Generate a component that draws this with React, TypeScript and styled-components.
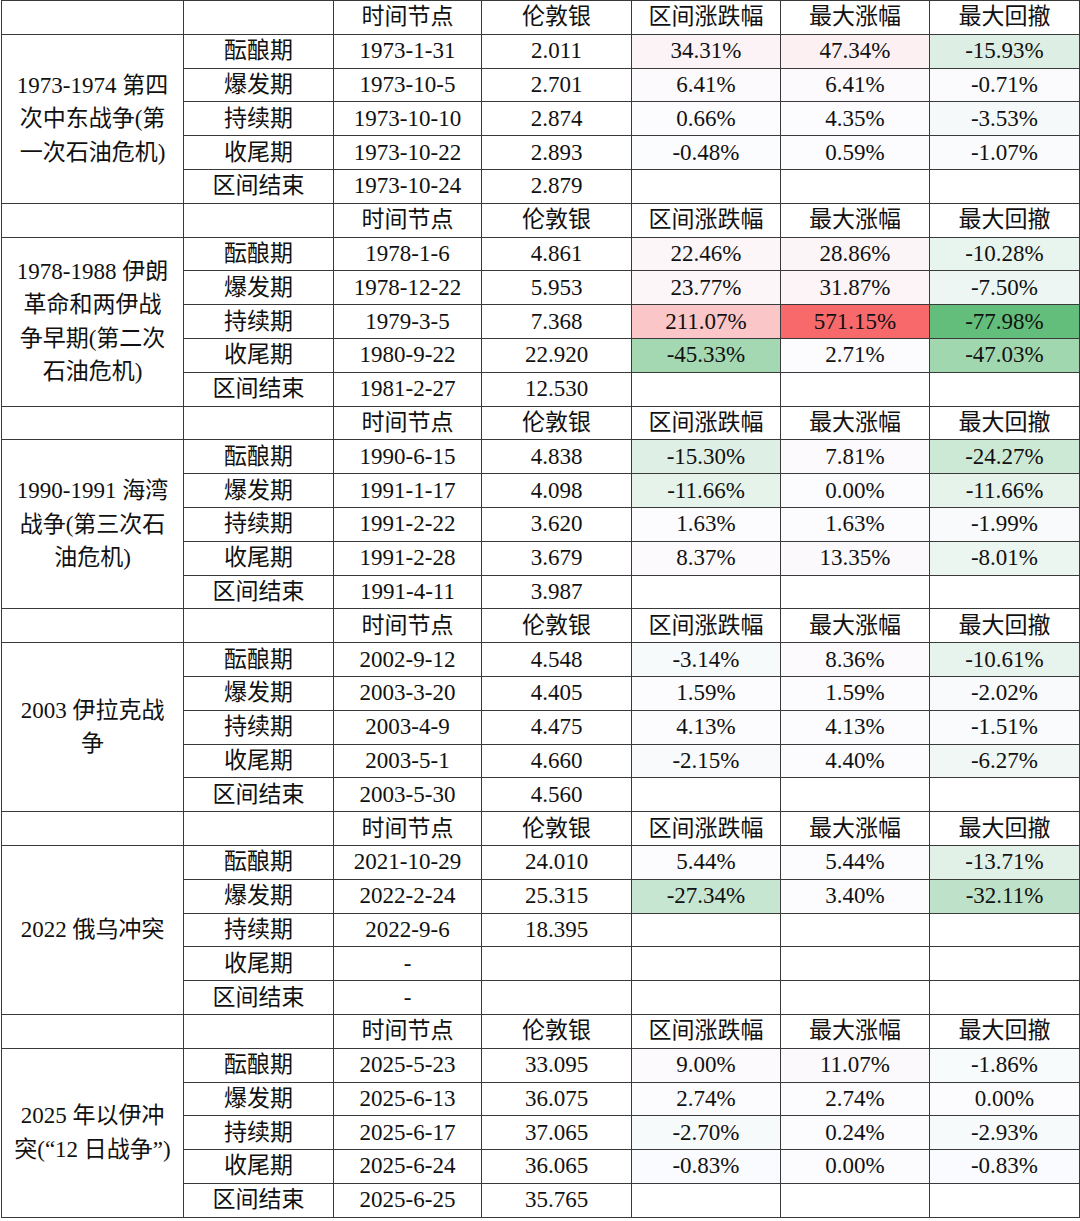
import React from "react";
import styled, { createGlobalStyle } from "styled-components";

const GlobalStyle = createGlobalStyle`
  html, body { margin: 0; padding: 0; background: #ffffff; }
  body { font-family: "Liberation Serif", "Noto Sans CJK SC", serif; color: #111; }
`;

const Table = styled.table`
  border-collapse: collapse;
  table-layout: fixed;
  width: 1078px;
  margin: 0 0 0 1px;
  font-family: "Liberation Serif", "Noto Sans CJK SC", serif;
  font-size: 23px;
  color: #111;
`;

const Row = styled.tr`
  height: 33.8px;
`;

const Cell = styled.td<{ $bg?: string }>`
  border: 1px solid #3a3a3a;
  padding: 0;
  text-align: center;
  vertical-align: middle;
  line-height: 32px;
  white-space: nowrap;
  background: ${(p) => p.$bg || "#ffffff"};
`;

const TitleCell = styled.td`
  border: 1px solid #3a3a3a;
  padding: 0;
  text-align: center;
  vertical-align: middle;
  line-height: 33.5px;
  background: #ffffff;
`;

const TitleLine = styled.div`
  white-space: nowrap;
`;

type Group = { title: string[]; rows: string[][] };

const groups: Group[] = [
  {
    title: ["1973-1974 第四", "次中东战争(第", "一次石油危机)"],
    rows: [
      ["酝酿期", "1973-1-31", "2.011", "34.31%", "47.34%", "-15.93%"],
      ["爆发期", "1973-10-5", "2.701", "6.41%", "6.41%", "-0.71%"],
      ["持续期", "1973-10-10", "2.874", "0.66%", "4.35%", "-3.53%"],
      ["收尾期", "1973-10-22", "2.893", "-0.48%", "0.59%", "-1.07%"],
      ["区间结束", "1973-10-24", "2.879", "", "", ""],
    ],
  },
  {
    title: ["1978-1988 伊朗", "革命和两伊战", "争早期(第二次", "石油危机)"],
    rows: [
      ["酝酿期", "1978-1-6", "4.861", "22.46%", "28.86%", "-10.28%"],
      ["爆发期", "1978-12-22", "5.953", "23.77%", "31.87%", "-7.50%"],
      ["持续期", "1979-3-5", "7.368", "211.07%", "571.15%", "-77.98%"],
      ["收尾期", "1980-9-22", "22.920", "-45.33%", "2.71%", "-47.03%"],
      ["区间结束", "1981-2-27", "12.530", "", "", ""],
    ],
  },
  {
    title: ["1990-1991 海湾", "战争(第三次石", "油危机)"],
    rows: [
      ["酝酿期", "1990-6-15", "4.838", "-15.30%", "7.81%", "-24.27%"],
      ["爆发期", "1991-1-17", "4.098", "-11.66%", "0.00%", "-11.66%"],
      ["持续期", "1991-2-22", "3.620", "1.63%", "1.63%", "-1.99%"],
      ["收尾期", "1991-2-28", "3.679", "8.37%", "13.35%", "-8.01%"],
      ["区间结束", "1991-4-11", "3.987", "", "", ""],
    ],
  },
  {
    title: ["2003 伊拉克战", "争"],
    rows: [
      ["酝酿期", "2002-9-12", "4.548", "-3.14%", "8.36%", "-10.61%"],
      ["爆发期", "2003-3-20", "4.405", "1.59%", "1.59%", "-2.02%"],
      ["持续期", "2003-4-9", "4.475", "4.13%", "4.13%", "-1.51%"],
      ["收尾期", "2003-5-1", "4.660", "-2.15%", "4.40%", "-6.27%"],
      ["区间结束", "2003-5-30", "4.560", "", "", ""],
    ],
  },
  {
    title: ["2022 俄乌冲突"],
    rows: [
      ["酝酿期", "2021-10-29", "24.010", "5.44%", "5.44%", "-13.71%"],
      ["爆发期", "2022-2-24", "25.315", "-27.34%", "3.40%", "-32.11%"],
      ["持续期", "2022-9-6", "18.395", "", "", ""],
      ["收尾期", "-", "", "", "", ""],
      ["区间结束", "-", "", "", "", ""],
    ],
  },
  {
    title: ["2025 年以伊冲", "突(“12 日战争”)"],
    rows: [
      ["酝酿期", "2025-5-23", "33.095", "9.00%", "11.07%", "-1.86%"],
      ["爆发期", "2025-6-13", "36.075", "2.74%", "2.74%", "0.00%"],
      ["持续期", "2025-6-17", "37.065", "-2.70%", "0.24%", "-2.93%"],
      ["收尾期", "2025-6-24", "36.065", "-0.83%", "0.00%", "-0.83%"],
      ["区间结束", "2025-6-25", "35.765", "", "", ""],
    ],
  },
];

const headers = ["时间节点", "伦敦银", "区间涨跌幅", "最大涨幅", "最大回撤"];

const MIN = -77.98;
const MAX = 571.15;
const WHITE = [252, 252, 255];
const GREEN = [99, 190, 123];
const RED = [248, 105, 107];

function scaleColor(text: string): string | undefined {
  if (!text) return undefined;
  const v = parseFloat(text.replace("%", ""));
  if (isNaN(v)) return undefined;
  const target = v < 0 ? GREEN : RED;
  const t = v < 0 ? v / MIN : v / MAX;
  const c = WHITE.map((w, i) => Math.round(w + (target[i] - w) * t));
  return `rgb(${c[0]}, ${c[1]}, ${c[2]})`;
}

const colWidths = [182, 150, 148, 150, 149, 149, 150];

export default function App() {
  return (
    <>
      <GlobalStyle />
      <Table>
        <colgroup>
          {colWidths.map((w, i) => (
            <col key={i} style={{ width: w }} />
          ))}
        </colgroup>
        <tbody>
          {groups.map((g, gi) => (
            <React.Fragment key={gi}>
              <Row>
                <Cell />
                <Cell />
                {headers.map((h) => (
                  <Cell key={h}>{h}</Cell>
                ))}
              </Row>
              {g.rows.map((r, ri) => (
                <Row key={ri}>
                  {ri === 0 && (
                    <TitleCell rowSpan={5}>
                      {g.title.map((t, ti) => (
                        <TitleLine key={ti}>{t}</TitleLine>
                      ))}
                    </TitleCell>
                  )}
                  <Cell>{r[0]}</Cell>
                  <Cell>{r[1]}</Cell>
                  <Cell>{r[2]}</Cell>
                  <Cell $bg={scaleColor(r[3])}>{r[3]}</Cell>
                  <Cell $bg={scaleColor(r[4])}>{r[4]}</Cell>
                  <Cell $bg={scaleColor(r[5])}>{r[5]}</Cell>
                </Row>
              ))}
            </React.Fragment>
          ))}
        </tbody>
      </Table>
    </>
  );
}
